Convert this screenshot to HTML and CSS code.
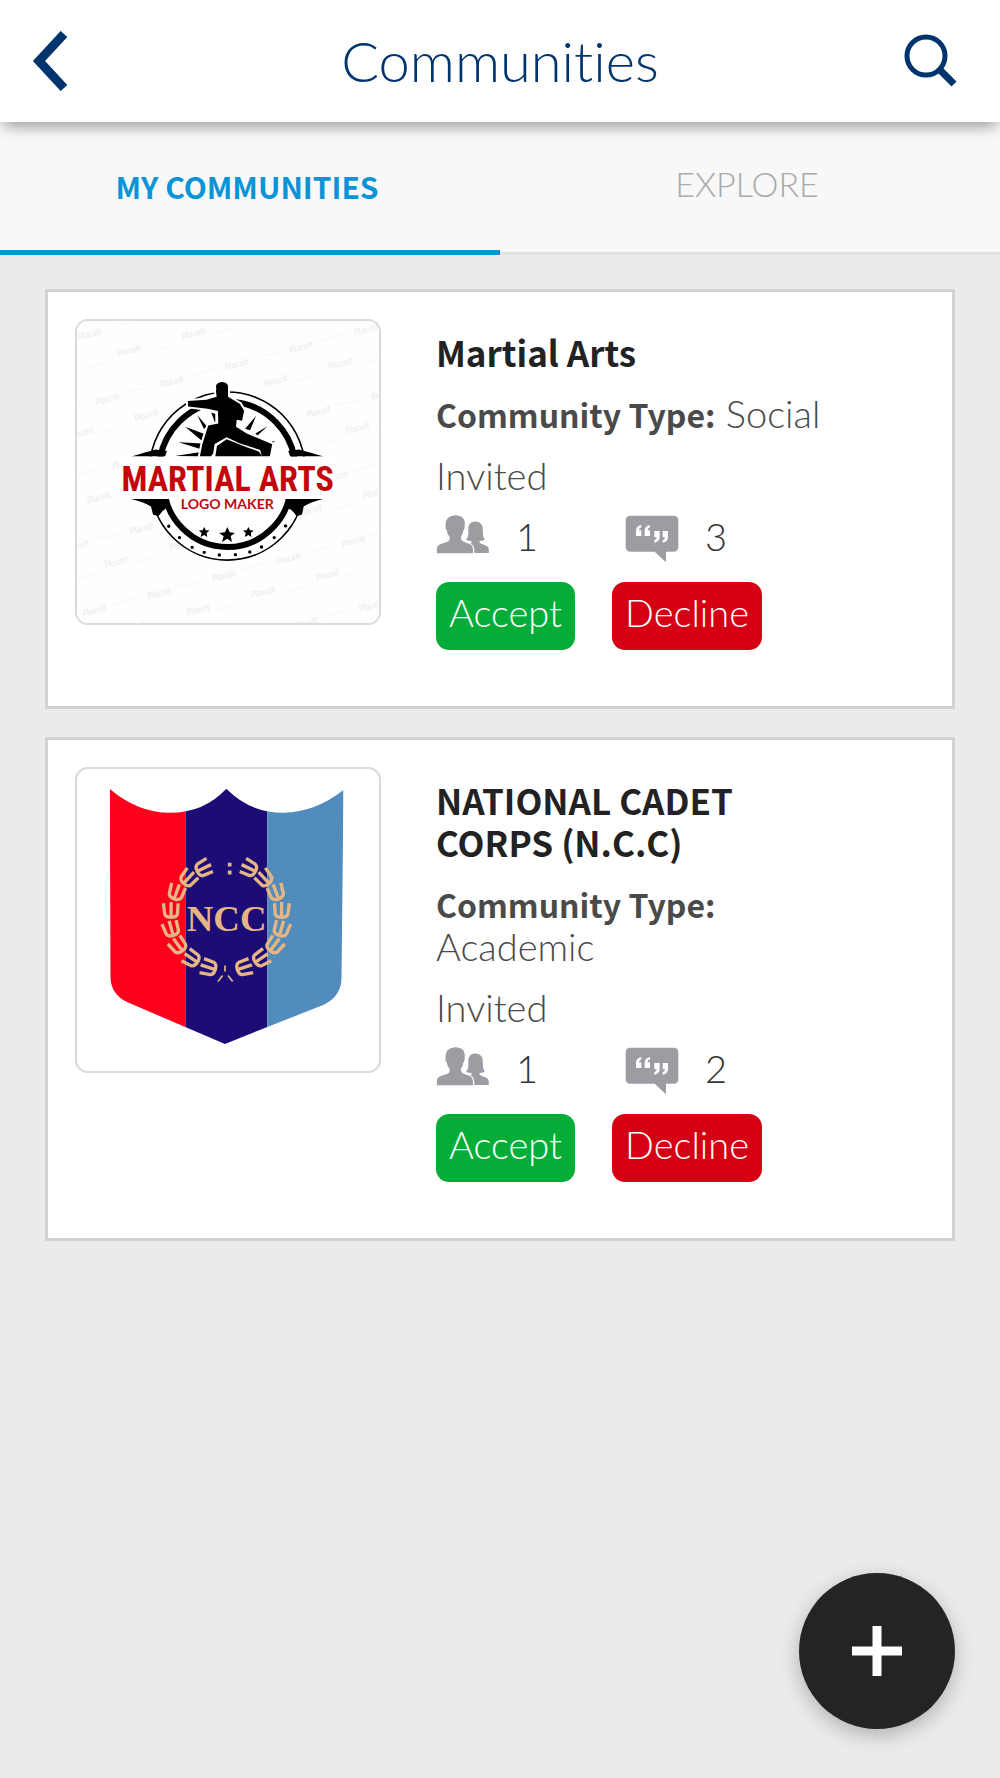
FILE: index.html
```html
<!DOCTYPE html>
<html lang="en">
<head>
    <meta charset="UTF-8">
    <meta name="viewport" content="width=device-width, initial-scale=1.0">
    <title>Communities</title>
    <link rel="stylesheet" href="styles.css">
</head>
<body>
    <!-- Shared icons -->
    <svg class="sprite" aria-hidden="true">
        <symbol id="members" viewBox="52 76 162 118">
            <path d="M54 192V178Q55 168 66 164L86 157Q93 154 93 147L92 141Q85 134 84 123Q79 119 80 108Q78 79 109 77Q142 78 138 108Q140 118 134 124Q133 134 127 141V148Q128 154 135 157L153 164Q163 168 163 179V192Z"/>
            <path d="M142 151Q151 143 149 120Q148 97 170 96Q193 97 193 120Q192 141 199 151Q193 155 183 155Q182 161 188 163L202 168Q211 171 211 181V191H167V179Q167 168 156 162Q160 160 159 155Q148 155 142 151Z"/>
        </symbol>
        <symbol id="posts" viewBox="617 76 162 144">
            <path d="M634 78H762Q777 78 777 93V171Q777 186 762 186H740V218L706 186H634Q619 186 619 171V93Q619 78 634 78Z"/>
            <g fill="#fff">
                <path d="M666 106V113Q659 114 659 122H666V139H650V124Q650 109 666 106Z"/>
                <path d="M692 106V113Q685 114 685 122H692V139H676V124Q676 109 692 106Z"/>
                <path d="M705 159V152Q712 151 712 143H705V124H721V141Q721 156 705 159Z"/>
                <path d="M730 159V152Q737 151 737 143H730V124H746V141Q746 156 730 159Z"/>
            </g>
        </symbol>
    </svg>

    <header class="header">
        <button type="button" class="icon-btn" aria-label="Back">
            <svg width="36" height="60" viewBox="0 0 36 60"><path d="M32 3L7 30L32 57" fill="none" stroke="#00346e" stroke-width="9"/></svg>
        </button>
        <h1>Communities</h1>
        <button type="button" class="icon-btn" aria-label="Search">
            <svg width="54" height="54" viewBox="0 0 54 54" fill="none" stroke="#00346e"><circle cx="22" cy="22" r="19" stroke-width="5"/><path d="M35 35L50 50" stroke-width="7"/></svg>
        </button>
    </header>

    <nav class="tabs">
        <a href="#my" class="tab active">MY COMMUNITIES</a>
        <a href="#explore" class="tab">EXPLORE</a>
    </nav>

    <main class="list">
        <article class="card">
            <div class="thumb">
                <svg viewBox="53 64 902 902" role="img" aria-label="Martial Arts logo">
                    <defs>
                        <pattern id="watermark" x="5" y="20" width="200" height="200" patternUnits="userSpaceOnUse" patternTransform="rotate(-15)">
                            <text x="20" y="112" class="mark">Placeit</text>
                            <path d="M110 101H190M10 199H90" stroke="#f0f0f0" stroke-width="2"/>
                            <text x="120" y="192" class="mark">Placeit</text>
                        </pattern>
                        <clipPath id="upper"><path d="M200 200H800V469H200Z"/></clipPath>
                        <clipPath id="lower"><path d="M200 596H800V800H200Z"/></clipPath>
                    </defs>
                    <path d="M53 64H955V966H53Z" fill="#fefefe"/>
                    <path d="M53 64H955V966H53Z" fill="url(#watermark)"/>
                    <g clip-path="url(#upper)">
                        <circle cx="502" cy="508" r="232" fill="#fff" stroke="#000" stroke-width="5"/>
                        <circle cx="502" cy="508" r="203" fill="#fff" stroke="#000" stroke-width="18"/>
                        <path d="M215 469Q260 456 288 448L322 452L316 469ZM790 469Q745 456 716 448L684 452L690 469Z"/>
                        <path d="M356 426L428 430L424 447ZM376 380L432 401L425 421ZM412 345L443 381L432 386ZM454 337L466 342V370ZM346 467L418 456V469ZM588 347L570 390L555 386ZM622 378L592 406L586 400ZM645 422L628 427L632 434Z"/>
                        <!-- fighter -->
                        <path d="M469 266Q464 248 486 246Q507 248 504 265V290L540 312L552 332L546 362L530 359L528 380L560 400L636 432L629 469H605L600 449L540 430L500 411L464 431L460 459L453 469H420L427 433L445 376L475 370L474 333L443 326L385 319L384 303L440 299L470 290L468 273Z" stroke="#fff" stroke-width="12" stroke-linejoin="round" paint-order="stroke"/>
                        <path d="M466 469L471 437L500 417L560 441L596 454L606 469Z"/>
                    </g>
                    <g clip-path="url(#lower)">
                        <circle cx="502" cy="548" r="230" fill="#fff" stroke="#000" stroke-width="5"/>
                        <circle cx="502" cy="550" r="189" fill="#fff" stroke="#000" stroke-width="18"/>
                        <path d="M215 596H318L325 620Q308 628 296 647L280 642L274 618Q255 606 215 596ZM788 596H684L678 620Q698 628 708 647L725 642L730 618Q748 606 788 596Z"/>
                        <path d="M433 679L438 689L449 690L440 697L442 709L433 703L422 709L425 697L417 690L428 689ZM502 679L509 695L525 697L512 706L516 724L502 714L486 724L491 707L478 697L495 695ZM565 679L570 689L581 690L572 697L574 709L565 703L554 709L557 697L549 690L560 689Z"/>
                        <path d="M327 677h.1M359 711h.1M397 740h.1M433 755h.1M478 763h.1M526 762h.1M569 754h.1M604 739h.1M642 711h.1M676 676h.1" stroke="#000" stroke-width="10" stroke-linecap="round"/>
                    </g>
                    <path d="M180 471H825V594H180Z" fill="#fff"/>
                    <text x="503" y="572" class="logo-title">MARTIAL ARTS</text>
                    <text x="502" y="627" class="logo-sub">LOGO MAKER</text>
                </svg>
            </div>
            <div class="info">
                <h2>Martial Arts</h2>
                <p><strong>Community Type:</strong> Social</p>
                <p>Invited</p>
                <div class="stats">
                    <span class="stat"><svg width="54" height="39" aria-label="Members"><use href="#members"/></svg>1</span>
                    <span class="stat"><svg width="54" height="48" aria-label="Posts"><use href="#posts"/></svg>3</span>
                </div>
                <div class="actions">
                    <button type="button" class="btn accept">Accept</button>
                    <button type="button" class="btn decline">Decline</button>
                </div>
            </div>
        </article>

        <article class="card">
            <div class="thumb">
                <svg viewBox="53 59 902 902" role="img" aria-label="NCC crest">
                    <defs>
                        <clipPath id="shield"><path d="M151 119Q235 190 330 190Q432 190 499 118Q570 190 670 190Q765 188 849 122L843 685Q842 738 790 763L495 880L204 756Q154 732 153 680Z"/></clipPath>
                        <path id="leaf" d="M-23 -22L-19 10Q-16 20 0 20Q16 20 19 10L21 -22M0 -26V18"/>
                        <g id="branch">
                            <use href="#leaf" transform="translate(430 356) rotate(64)"/>
                            <use href="#leaf" transform="translate(385 386) rotate(42)"/>
                            <use href="#leaf" transform="translate(350 428) rotate(20)"/>
                            <use href="#leaf" transform="translate(334 482) rotate(0)"/>
                            <use href="#leaf" transform="translate(335 537) rotate(-16)"/>
                            <use href="#leaf" transform="translate(356 586) rotate(-36)"/>
                            <use href="#leaf" transform="translate(396 625) rotate(-56)"/>
                            <use href="#leaf" transform="translate(447 652) rotate(-72)"/>
                        </g>
                    </defs>
                    <g clip-path="url(#shield)">
                        <path d="M140 100H377V900H140Z" fill="#ff001c"/>
                        <path d="M377 100H621V900H377Z" fill="#1b0c76"/>
                        <path d="M621 100H860V900H621Z" fill="#528cbc"/>
                    </g>
                    <g fill="none" stroke="#e5b583" stroke-width="10">
                        <use href="#branch"/>
                        <use href="#branch" transform="translate(998 0) scale(-1 1)"/>
                        <path d="M509 339V350M509 362V374" stroke-width="11"/>
                        <path d="M495 646V664M488 676L474 694M504 676L518 694" stroke-width="5"/>
                    </g>
                    <text x="500" y="542" class="crest">NCC</text>
                </svg>
            </div>
            <div class="info">
                <h2>NATIONAL CADET CORPS (N.C.C)</h2>
                <p><strong>Community Type:</strong> Academic</p>
                <p>Invited</p>
                <div class="stats">
                    <span class="stat"><svg width="54" height="39" aria-label="Members"><use href="#members"/></svg>1</span>
                    <span class="stat"><svg width="54" height="48" aria-label="Posts"><use href="#posts"/></svg>2</span>
                </div>
                <div class="actions">
                    <button type="button" class="btn accept">Accept</button>
                    <button type="button" class="btn decline">Decline</button>
                </div>
            </div>
        </article>
    </main>

    <button type="button" class="fab" aria-label="Add community">
        <svg width="52" height="52" viewBox="0 0 52 52"><path d="M26 1V51M1 26H51" stroke="#fff" stroke-width="9"/></svg>
    </button>
</body>
</html>
```
FILE: styles.css
```css
* {
    box-sizing: border-box;
}
body {
    margin: 0;
    min-height: 100vh;
    background-color: #ebebeb;
    color: #4a4a4a;
    font-family: Lato, "Noto Sans", sans-serif;
    font-weight: 300;
    font-size: 38px;
    line-height: 42px;
    font-variant-ligatures: none;
}
h1, h2, p {
    margin: 0;
}
button {
    border: none;
    font: inherit;
    cursor: pointer;
}
svg {
    display: block;
}
.sprite {
    position: absolute;
    width: 0;
    height: 0;
}
.header {
    position: relative;
    display: grid;
    grid-template-columns: 1fr auto 1fr;
    align-items: center;
    height: 122px;
    padding: 0 42px 0 32px;
    background-color: #fff;
    box-shadow: 0 8px 14px -4px rgba(0, 0, 0, 0.4);
}
.header h1 {
    padding-left: 10px;
    color: #00346e;
    font-size: 56px;
    font-weight: 300;
    line-height: 64px;
}
.icon-btn {
    justify-self: start;
    padding: 0;
    background: none;
}
.icon-btn:last-child {
    justify-self: end;
}
.tabs {
    display: grid;
    grid-template-columns: 1fr 1fr;
    background-color: #f8f8f8;
}
.tab {
    padding: 40px 6px 44px 0;
    border-bottom: 3px solid #e2e2e2;
    color: #aaa;
    font-size: 34px;
    line-height: 44px;
    text-align: center;
    text-decoration: none;
}
.tab.active {
    padding-top: 42px;
    padding-bottom: 42px;
    border-bottom: 5px solid #0a94d6;
    color: #0a94d6;
    font-family: "Noto Sans CJK SC", sans-serif;
    font-size: 30px;
    font-weight: bold;
}
.list {
    display: flex;
    flex-direction: column;
    gap: 28px;
    padding: 34px 45px;
}
.card {
    display: grid;
    grid-template-columns: 306px 1fr;
    align-items: start;
    gap: 55px;
    padding: 27px 110px 56px 27px;
    border: 3px solid #d2d2d2;
    background-color: #fff;
}
.thumb {
    border: 2px solid #dadada;
    border-radius: 13px;
    overflow: hidden;
}
.info {
    display: flex;
    flex-direction: column;
    gap: 19px;
    padding-top: 12px;
}
.info h2,
.info strong {
    font-family: "Noto Sans CJK SC", sans-serif;
    font-size: 35px;
    font-weight: bold;
    line-height: 42px;
}
.info h2 {
    color: #222;
}
.info strong {
    font-size: 32px;
}
.stats {
    display: grid;
    grid-template-columns: 189px 1fr;
    height: 48px;
}
.stat {
    display: flex;
    align-items: flex-start;
    gap: 26px;
    color: #333;
}
.stat svg {
    fill: #9b9da3;
}
.actions {
    display: flex;
    gap: 37px;
}
.btn {
    padding: 9px 13px 17px;
    border-radius: 13px;
    color: #fff;
}
.accept {
    background-color: #04ad37;
}
.decline {
    background-color: #d60015;
}
.fab {
    position: fixed;
    right: 45px;
    bottom: 49px;
    display: flex;
    align-items: center;
    justify-content: center;
    width: 156px;
    height: 156px;
    border-radius: 50%;
    background-color: #242424;
    box-shadow: 0 6px 20px rgba(0, 0, 0, 0.25);
}
.mark {
    fill: #e8e8e8;
    font-size: 26px;
    font-style: italic;
    font-weight: 400;
}
.logo-title {
    fill: #c4060b;
    font-family: "Roboto Condensed", "Noto Sans CJK SC", sans-serif;
    font-size: 102px;
    font-weight: bold;
    text-anchor: middle;
}
.logo-sub {
    fill: #c4060b;
    font-family: Lato, sans-serif;
    font-size: 42px;
    font-weight: 700;
    text-anchor: middle;
}
.crest {
    fill: #e5b583;
    font-family: "Liberation Serif", serif;
    font-size: 110px;
    font-weight: bold;
    text-anchor: middle;
}
```
